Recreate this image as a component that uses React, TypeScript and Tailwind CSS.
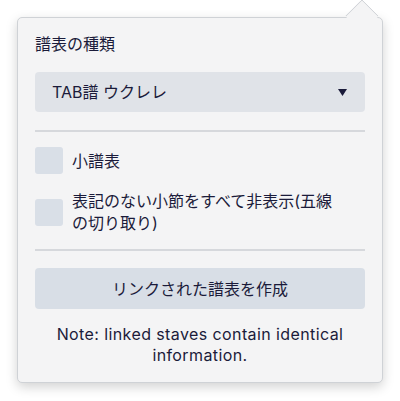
import React, { useState } from 'react';

const font = { fontFamily: 'Inter, "Noto Sans CJK JP", sans-serif' };

const Checkbox: React.FC<{ label: string; checked: boolean; onToggle: () => void }> = ({ label, checked, onToggle }) => (
  <label className="flex items-center gap-[9px] cursor-pointer">
    <button
      type="button"
      onClick={onToggle}
      className="w-[28px] h-[27px] shrink-0 rounded-[3px] bg-[#d9dfe7] flex items-center justify-center"
    >
      {checked && <span className="text-[#1b1b3a] text-sm">✓</span>}
    </button>
    <span className="max-w-[272px] text-[16px] leading-[22px] text-[#1b1b3a]">{label}</span>
  </label>
);

export default function App() {
  const [small, setSmall] = useState(false);
  const [hideEmpty, setHideEmpty] = useState(false);

  return (
    <div className="w-[400px] h-[401px] bg-white pt-[17px] pl-[17px]" style={font}>
      <div className="relative w-[366px]">
        <div className="rounded-[5px] border border-[#cfd2d6] bg-[#f4f4f5] shadow-[0_4px_12px_rgba(0,0,0,0.18)] px-[17px] pt-[15px] pb-[16px]">
          <div className="text-[16px] leading-[22px] text-[#1b1b3a]">譜表の種類</div>
          <button
            type="button"
            className="mt-[17px] w-full h-[40px] rounded-[4px] bg-[#e0e3e8] flex items-center justify-between pl-[17px] pr-[18px] text-[16px] text-[#1b1b3a]"
          >
            <span>TAB譜 ウクレレ</span>
            <svg width="9" height="7" viewBox="0 0 9 7">
              <path d="M0 0H9L4.5 7Z" fill="#1b1b3a" />
            </svg>
          </button>
          <div className="mt-[18px] h-[2px] bg-[#d6d8dc]" />
          <div className="mt-[15px] flex flex-col gap-[16px]">
            <Checkbox label="小譜表" checked={small} onToggle={() => setSmall(!small)} />
            <Checkbox
              label="表記のない小節をすべて非表示(五線の切り取り)"
              checked={hideEmpty}
              onToggle={() => setHideEmpty(!hideEmpty)}
            />
          </div>
          <div className="mt-[15px] h-[2px] bg-[#d6d8dc]" />
          <button
            type="button"
            className="mt-[17px] w-full h-[41px] rounded-[4px] bg-[#d8dee6] text-[16px] text-[#1b1b3a]"
          >
            リンクされた譜表を作成
          </button>
          <p className="mt-[15px] text-center text-[16px] leading-[21px] tracking-[0.4px] text-[#1b1b3a]">
            Note: linked staves contain identical information.
          </p>
        </div>
        {/* popover arrow */}
        <div className="absolute right-[9px] top-[-13px] w-[24px] h-[24px] rotate-45 bg-[#f4f4f5] border-l border-t border-[#cfd2d6] rounded-tl-[2px]" />
      </div>
    </div>
  );
}
